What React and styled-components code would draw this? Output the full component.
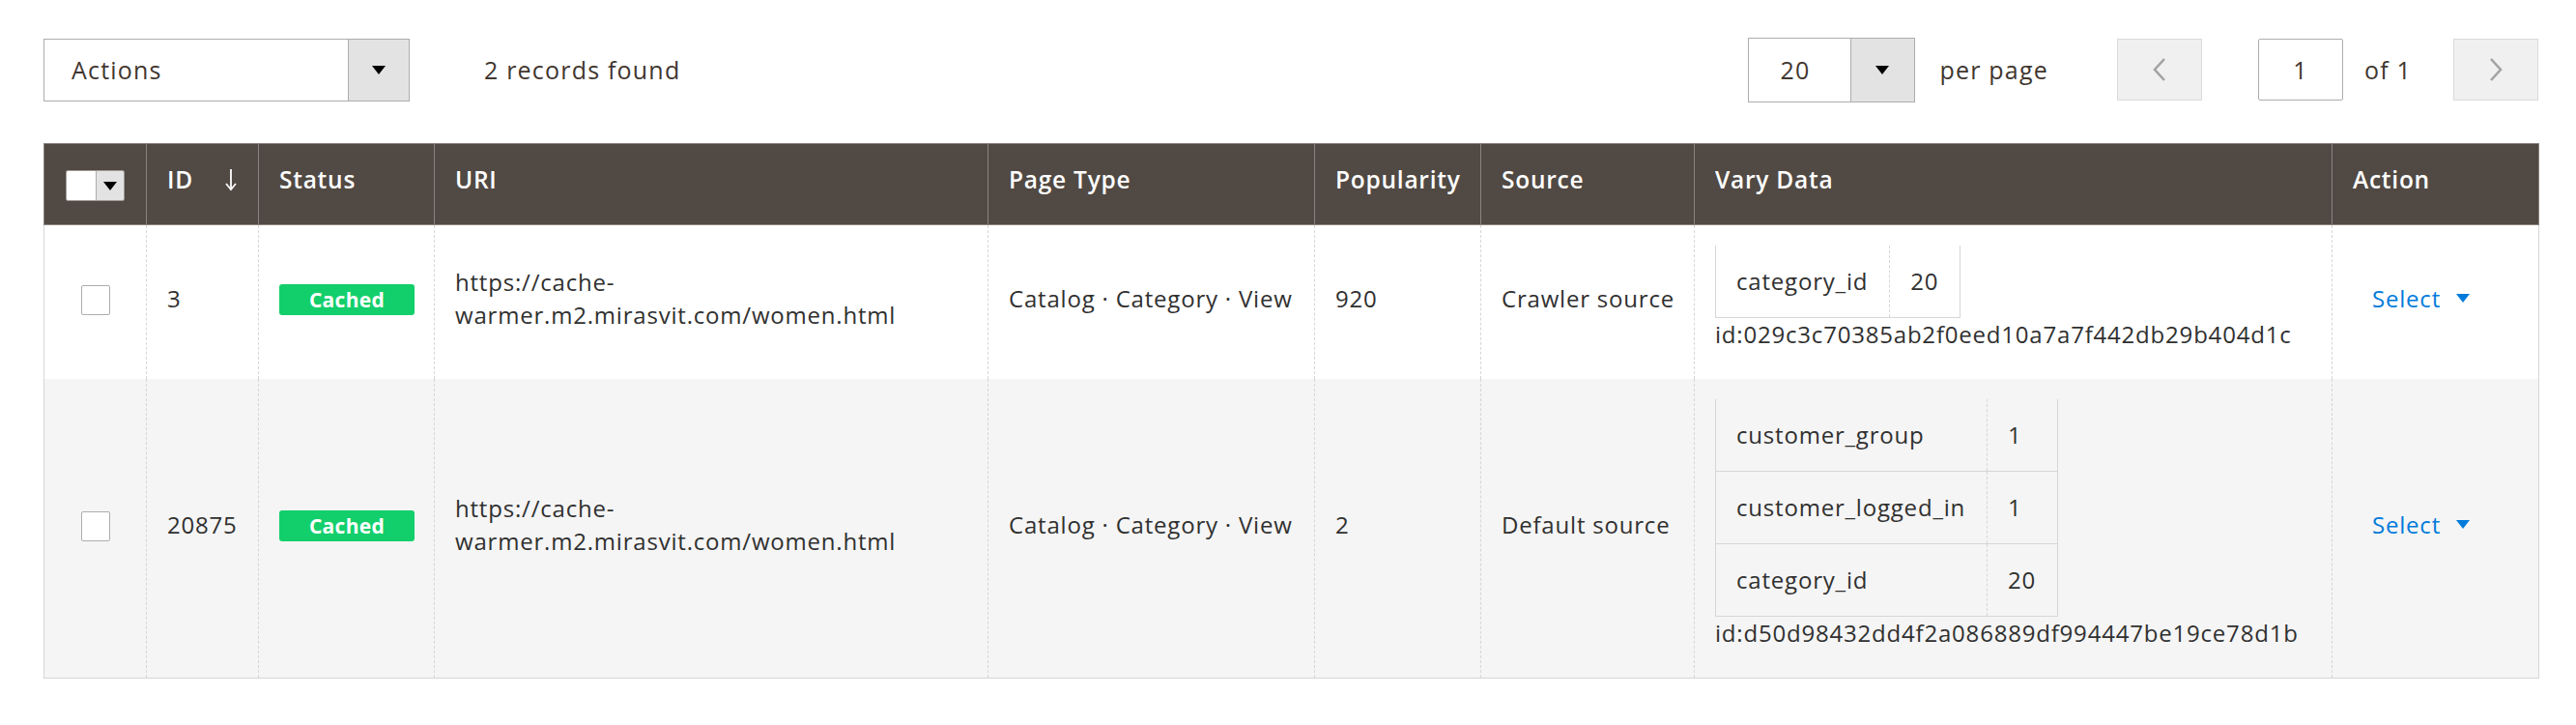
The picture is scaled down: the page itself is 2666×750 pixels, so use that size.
import React from "react";
import styled, { createGlobalStyle } from "styled-components";

// Cache warmer pages grid: toolbar with mass actions and pager, then the pages table.

const GlobalStyle = createGlobalStyle`
  html, body {
    margin: 0;
    padding: 0;
    background: #ffffff;
    font-family: "Open Sans", "Noto Sans", sans-serif;
    color: #303030;
  }
`;

const Page = styled.div`
  padding: 38px 39px 40px 45px;
`;

const Toolbar = styled.div`
  display: flex;
  align-items: center;
  height: 68px;
  margin-bottom: 42px;
  font-size: 25px;
  letter-spacing: 1.2px;
  color: #41362f;
`;

const SelectBox = styled.div`
  display: flex;
  width: ${(p) => p.width}px;
  height: ${(p) => p.height}px;
  border: 1px solid #adadad;
  box-sizing: border-box;
  background: #ffffff;
`;

const SelectValue = styled.div`
  flex: 1;
  display: flex;
  align-items: center;
  padding-left: ${(p) => p.pad}px;
`;

const SelectArrow = styled.div`
  width: ${(p) => p.width}px;
  border-left: 1px solid #adadad;
  background: #e3e3e3;
  display: flex;
  align-items: center;
  justify-content: center;
`;

const Triangle = styled.span`
  width: 0;
  height: 0;
  border-left: ${(p) => p.size}px solid transparent;
  border-right: ${(p) => p.size}px solid transparent;
  border-top: ${(p) => Math.round(p.size * 1.3)}px solid ${(p) => p.color || "#000"};
`;

const Records = styled.div`
  margin-left: 77px;
`;

const Spacer = styled.div`
  flex: 1;
`;

const Label = styled.div`
  margin-left: ${(p) => p.left}px;
  margin-right: ${(p) => p.right}px;
`;

const PagerButton = styled.div`
  width: 88px;
  height: 64px;
  box-sizing: border-box;
  border: 1px solid #dadada;
  background: #f0f0f0;
  display: flex;
  align-items: center;
  justify-content: center;
`;

const PageInput = styled.div`
  width: 88px;
  height: 64px;
  box-sizing: border-box;
  border: 1px solid #adadad;
  border-radius: 2px;
  background: #ffffff;
  display: flex;
  align-items: center;
  justify-content: center;
  margin-left: 58px;
`;

const Grid = styled.table`
  width: 100%;
  border-collapse: collapse;
  table-layout: fixed;
  border-bottom: 1px solid #d6d6d6;
`;

const Th = styled.th`
  background: #514943;
  color: #ffffff;
  font-size: 24.5px;
  letter-spacing: 0.75px;
  font-weight: 600;
  text-align: left;
  line-height: 34px;
  height: 84px;
  box-sizing: border-box;
  padding: 0 ${(p) => (p.center ? 0 : 21)}px 10px;
  vertical-align: middle;
  border: 1px solid #8a837f;
  white-space: nowrap;
  ${(p) => p.center && "text-align: center; padding-bottom: 0;"}
`;

const HeadInner = styled.div`
  display: flex;
  align-items: center;
  justify-content: space-between;
`;

const Row = styled.tr`
  background: ${(p) => (p.alt ? "#f5f5f5" : "#ffffff")};
`;

const Td = styled.td`
  font-size: 24px;
  letter-spacing: 0.8px;
  line-height: 34px;
  padding: 21px 21px 29px;
  vertical-align: middle;
  white-space: ${(p) => (p.wrap ? "normal" : "nowrap")};
  border-left: 1px dashed #d6d6d6;
  border-right: 1px dashed #d6d6d6;
  ${(p) => p.first && "border-left: 1px solid #d6d6d6; text-align: center;"}
  ${(p) => p.last && "border-right: 1px solid #d6d6d6;"}
  word-wrap: break-word;
`;

const MultiSelect = styled.div`
  display: inline-flex;
  width: 61px;
  height: 32px;
  box-sizing: border-box;
  border: 1px solid #a09a96;
  border-radius: 2px;
  overflow: hidden;
  vertical-align: middle;
`;

const MultiBox = styled.div`
  width: 30px;
  background: #ffffff;
`;

const MultiArrow = styled.div`
  flex: 1;
  background: #e3e3e3;
  border-left: 1px solid #adadad;
  display: flex;
  align-items: center;
  justify-content: center;
`;

const Checkbox = styled.span`
  display: inline-block;
  width: 30px;
  height: 31px;
  box-sizing: border-box;
  border: 1px solid #adadad;
  border-radius: 2px;
  background: #ffffff;
  vertical-align: middle;
`;

const Badge = styled.span`
  display: inline-block;
  width: 140px;
  height: 32px;
  line-height: 32px;
  border-radius: 3px;
  background: #13cf6b;
  color: #ffffff;
  font-weight: 700;
  font-size: 21px;
  letter-spacing: 0.3px;
  text-align: center;
  vertical-align: middle;
`;

const VaryTable = styled.table`
  border-collapse: collapse;
`;

const VaryCell = styled.td`
  padding: 20px 22px 20px 21px;
  line-height: 34px;
  white-space: nowrap;
  border-bottom: 1px solid #d6d6d6;
  border-left: ${(p) => (p.value ? "1px dashed #d6d6d6" : "1px solid #d6d6d6")};
  border-right: ${(p) => (p.value ? "1px solid #d6d6d6" : "0")};
`;

const Hash = styled.div`
  white-space: nowrap;
`;

const SelectLink = styled.span`
  display: inline-flex;
  align-items: center;
  gap: 16px;
  color: #007bdb;
  margin-left: 20px;
`;

const columns = [106, 116, 182, 573, 338, 172, 221, 660, 214];

const rows = [
  {
    id: "3",
    popularity: "920",
    source: "Crawler source",
    vary: [["category_id", "20"]],
    hash: "id:029c3c70385ab2f0eed10a7a7f442db29b404d1c"
  },
  {
    id: "20875",
    popularity: "2",
    source: "Default source",
    vary: [
      ["customer_group", "1"],
      ["customer_logged_in", "1"],
      ["category_id", "20"]
    ],
    hash: "id:d50d98432dd4f2a086889df994447be19ce78d1b"
  }
];

function Chevron({ dir }) {
  const pts = dir === "left" ? "13,2 3,13 13,24" : "3,2 13,13 3,24";
  return (
    <svg width="16" height="26" viewBox="0 0 16 26">
      <polyline points={pts} fill="none" stroke="#a3a3a3" strokeWidth="2.6" />
    </svg>
  );
}

function SortArrow() {
  return (
    <svg width="14" height="26" viewBox="0 0 14 26">
      <line x1="7" y1="2" x2="7" y2="23" stroke="#fff" strokeWidth="1.8" />
      <polyline points="2,17 7,23 12,17" fill="none" stroke="#fff" strokeWidth="1.8" />
    </svg>
  );
}

export default function App() {
  return (
    <Page>
      <GlobalStyle />
      <Toolbar>
        <SelectBox width={379} height={65}>
          <SelectValue pad={28}>Actions</SelectValue>
          <SelectArrow width={62}>
            <Triangle size={7} />
          </SelectArrow>
        </SelectBox>
        <Records>2 records found</Records>
        <Spacer />
        <SelectBox width={173} height={67}>
          <SelectValue pad={33}>20</SelectValue>
          <SelectArrow width={65}>
            <Triangle size={7} />
          </SelectArrow>
        </SelectBox>
        <Label left={26} right={71}>per page</Label>
        <PagerButton>
          <Chevron dir="left" />
        </PagerButton>
        <PageInput>1</PageInput>
        <Label left={22} right={43}>of 1</Label>
        <PagerButton>
          <Chevron dir="right" />
        </PagerButton>
      </Toolbar>

      <Grid>
        <colgroup>
          {columns.map((w, i) => (
            <col key={i} style={{ width: w }} />
          ))}
        </colgroup>
        <thead>
          <tr>
            <Th center>
              <MultiSelect>
                <MultiBox />
                <MultiArrow>
                  <Triangle size={7} />
                </MultiArrow>
              </MultiSelect>
            </Th>
            <Th>
              <HeadInner>
                <span>ID</span>
                <SortArrow />
              </HeadInner>
            </Th>
            <Th>Status</Th>
            <Th>URI</Th>
            <Th>Page Type</Th>
            <Th>Popularity</Th>
            <Th>Source</Th>
            <Th>Vary Data</Th>
            <Th>Action</Th>
          </tr>
        </thead>
        <tbody>
          {rows.map((r, i) => (
            <Row key={r.id} alt={i % 2 === 1}>
              <Td first>
                <Checkbox />
              </Td>
              <Td>{r.id}</Td>
              <Td>
                <Badge>Cached</Badge>
              </Td>
              <Td wrap>https://cache-warmer.m2.mirasvit.com/women.html</Td>
              <Td>Catalog · Category · View</Td>
              <Td>{r.popularity}</Td>
              <Td>{r.source}</Td>
              <Td>
                <VaryTable>
                  <tbody>
                    {r.vary.map(([k, v]) => (
                      <tr key={k}>
                        <VaryCell>{k}</VaryCell>
                        <VaryCell value>{v}</VaryCell>
                      </tr>
                    ))}
                  </tbody>
                </VaryTable>
                <Hash>{r.hash}</Hash>
              </Td>
              <Td last>
                <SelectLink>
                  Select
                  <Triangle size={7} color="#007bdb" />
                </SelectLink>
              </Td>
            </Row>
          ))}
        </tbody>
      </Grid>
    </Page>
  );
}
